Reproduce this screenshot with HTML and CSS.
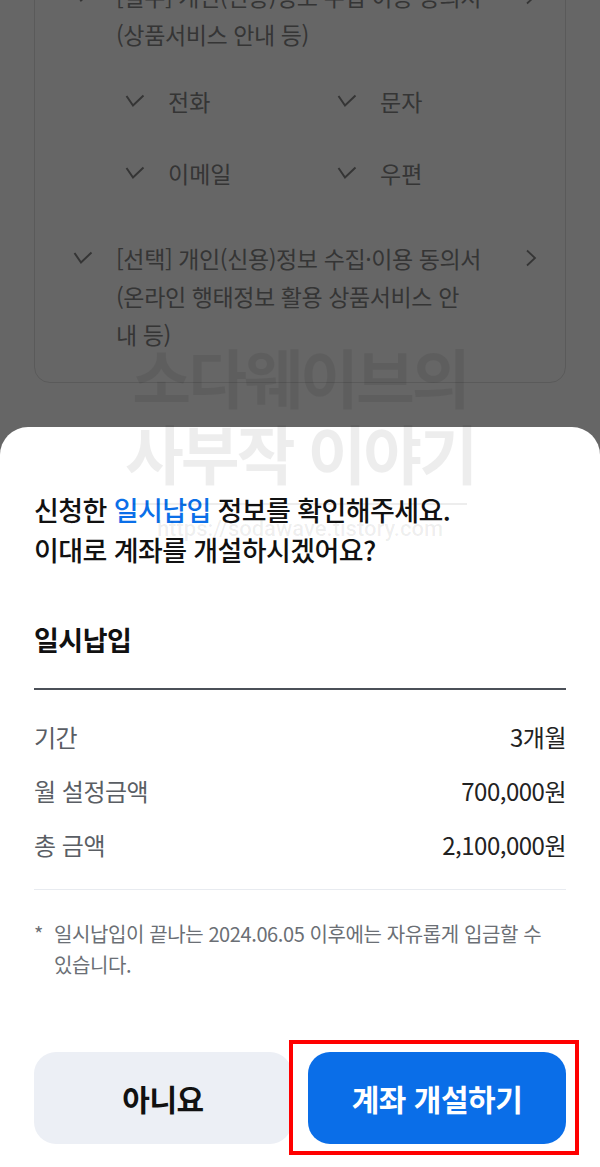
FILE: index.html
```html
<!DOCTYPE html>
<html lang="ko">
<head>
<meta charset="utf-8">
<title>일시납입 확인</title>
<link rel="stylesheet" href="styles.css">
</head>
<body>
<div class="screen">
  <main class="page">
    <section class="terms-card">
      <div class="term">
        <svg class="check" viewBox="0 0 20 14" width="20" height="14"><path d="M1.5 2 L8 11.5 L18.5 1.5"/></svg>
        <p class="term-text">[필수] 개인(신용)정보 수집·이용 동의서<br>(상품서비스 안내 등)</p>
        <svg class="chev" viewBox="0 0 12 18" width="12" height="18"><path d="M2 1.5 L10 9 L2 16.5"/></svg>
      </div>
      <ul class="channels">
        <li><svg class="check" viewBox="0 0 20 14" width="20" height="14"><path d="M1.5 2 L8 11.5 L18.5 1.5"/></svg>전화</li>
        <li><svg class="check" viewBox="0 0 20 14" width="20" height="14"><path d="M1.5 2 L8 11.5 L18.5 1.5"/></svg>문자</li>
        <li><svg class="check" viewBox="0 0 20 14" width="20" height="14"><path d="M1.5 2 L8 11.5 L18.5 1.5"/></svg>이메일</li>
        <li><svg class="check" viewBox="0 0 20 14" width="20" height="14"><path d="M1.5 2 L8 11.5 L18.5 1.5"/></svg>우편</li>
      </ul>
      <div class="term term-second">
        <svg class="check" viewBox="0 0 20 14" width="20" height="14"><path d="M1.5 2 L8 11.5 L18.5 1.5"/></svg>
        <p class="term-text">[선택] 개인(신용)정보 수집·이용 동의서<br>(온라인 행태정보 활용 상품서비스 안<br>내 등)</p>
        <svg class="chev" viewBox="0 0 12 18" width="12" height="18"><path d="M2 1.5 L10 9 L2 16.5"/></svg>
      </div>
    </section>
    <h2 class="page-heading">[유의] 확인사항</h2>
  </main>

  <div class="dim"></div>

  <section class="sheet">
    <h1 class="sheet-title">신청한 <span class="accent">일시납입</span> 정보를 확인해주세요.<br>이대로 계좌를 개설하시겠어요?</h1>
    <h2 class="product">일시납입</h2>
    <dl class="summary">
      <div class="row"><dt>기간</dt><dd>3개월</dd></div>
      <div class="row"><dt>월 설정금액</dt><dd>700,000원</dd></div>
      <div class="row"><dt>총 금액</dt><dd>2,100,000원</dd></div>
    </dl>
    <p class="note"><span class="mark">*</span><span>일시납입이 끝나는 2024.06.05 이후에는 자유롭게 입금할 수 있습니다.</span></p>
    <div class="actions">
      <button class="btn btn-no">아니요</button>
      <button class="btn btn-yes">계좌 개설하기</button>
    </div>
  </section>

  <div class="watermark">
    <div class="wm-line">소다웨이브의</div>
    <div class="wm-line">사부작 이야기</div>
    <div class="wm-rule"></div>
    <div class="wm-url">https://sodawave.tistory.com</div>
  </div>

  <div class="highlight"></div>
</div>
</body>
</html>
```

FILE: styles.css
```css
* { box-sizing: border-box; }

html, body {
  margin: 0;
  padding: 0;
  background: #ffffff;
}

body {
  font-family: "Noto Sans CJK KR", "Noto Sans", sans-serif;
  color: #111;
}

.screen {
  position: relative;
  width: 600px;
  height: 1167px;
  overflow: hidden;
  background: #ffffff;
}

/* ---------- background page ---------- */
.page {
  margin-top: -44px;
  color: #858585;
}

.terms-card {
  margin: 0 34px;
  border: 1px solid #e1e1e1;
  border-radius: 16px;
  padding: 20px 28px 29px 38px;
}

.term {
  display: flex;
  align-items: flex-start;
}

.term .check {
  margin-top: 12px;
  flex: none;
}

.term-text {
  flex: 1;
  margin: 0 0 0 23px;
  font-size: 23px;
  line-height: 38px;
  letter-spacing: -0.4px;
}

.chev {
  flex: none;
  margin-top: 10px;
  fill: none;
  stroke: #858585;
  stroke-width: 1.8;
}

.check {
  fill: none;
  stroke: #858585;
  stroke-width: 2;
  stroke-linejoin: miter;
}

.channels {
  list-style: none;
  margin: 29px 0 0 52px;
  padding: 0;
  display: grid;
  grid-template-columns: 212px 1fr;
  row-gap: 34px;
}

.channels li {
  display: flex;
  align-items: center;
  gap: 23px;
  font-size: 23px;
  line-height: 38px;
}

.term-second {
  margin-top: 47px;
}

.page-heading {
  margin: 39px 34px 0;
  font-size: 22px;
  line-height: 30px;
  font-weight: 700;
  color: #000;
}

.dim {
  position: absolute;
  inset: 0;
  background: rgba(0, 0, 0, 0.6);
}

/* ---------- bottom sheet ---------- */
.sheet {
  position: absolute;
  left: 0;
  right: 0;
  top: 427px;
  bottom: 0;
  background: #ffffff;
  border-radius: 28px 28px 0 0;
  padding: 63px 34px 23px;
  display: flex;
  flex-direction: column;
}

.sheet-title {
  margin: 0;
  font-size: 27px;
  line-height: 40px;
  font-weight: 500;
  color: #111;
  letter-spacing: -0.6px;
}

.accent {
  color: #0b6fe8;
}

.product {
  margin: 52px 0 0;
  font-size: 27px;
  line-height: 36px;
  font-weight: 700;
  color: #111;
  padding-bottom: 30px;
  border-bottom: 2px solid #4b5058;
  letter-spacing: -0.5px;
}

.summary {
  margin: 0;
  padding: 20px 0 17px;
  border-bottom: 1px solid #e8ebf0;
}

.row {
  display: flex;
  justify-content: space-between;
  font-size: 24px;
  line-height: 54px;
  letter-spacing: -0.5px;
}

.row dt {
  color: #5a5e64;
}

.row dd {
  margin: 0;
  color: #222;
}

.note {
  margin: 28px 0 0;
  display: flex;
  font-size: 20px;
  line-height: 31px;
  color: #6b6f75;
  word-break: keep-all;
  letter-spacing: -0.4px;
}

.note .mark {
  flex: none;
  width: 20px;
}

.actions {
  margin-top: auto;
  display: grid;
  grid-template-columns: 1fr 1fr;
  gap: 16px;
  height: 92px;
}

.btn {
  border: none;
  border-radius: 22px;
  font-family: inherit;
  font-size: 30px;
  letter-spacing: -0.5px;
}

.btn-no {
  background: #eceff5;
  color: #111;
  font-weight: 700;
}

.btn-yes {
  background: #0a6ee8;
  color: #ffffff;
  font-weight: 600;
}

/* ---------- overlays ---------- */
.watermark {
  position: absolute;
  left: 113px;
  top: 337px;
  width: 374px;
  text-align: center;
  color: rgba(0, 0, 0, 0.07);
  pointer-events: none;
}

.wm-line {
  font-size: 64px;
  line-height: 76px;
  font-weight: 700;
  letter-spacing: -3px;
  white-space: nowrap;
}

.wm-rule {
  margin: 14px 20px 0;
  height: 2px;
  background: rgba(0, 0, 0, 0.07);
}

.wm-url {
  margin-top: 12px;
  font-family: "Roboto", "Liberation Sans", sans-serif;
  font-size: 22px;
  line-height: 24px;
  font-weight: 500;
}

.highlight {
  position: absolute;
  left: 289px;
  top: 1040px;
  width: 290px;
  height: 115px;
  border: 4px solid #ff0000;
}
```
